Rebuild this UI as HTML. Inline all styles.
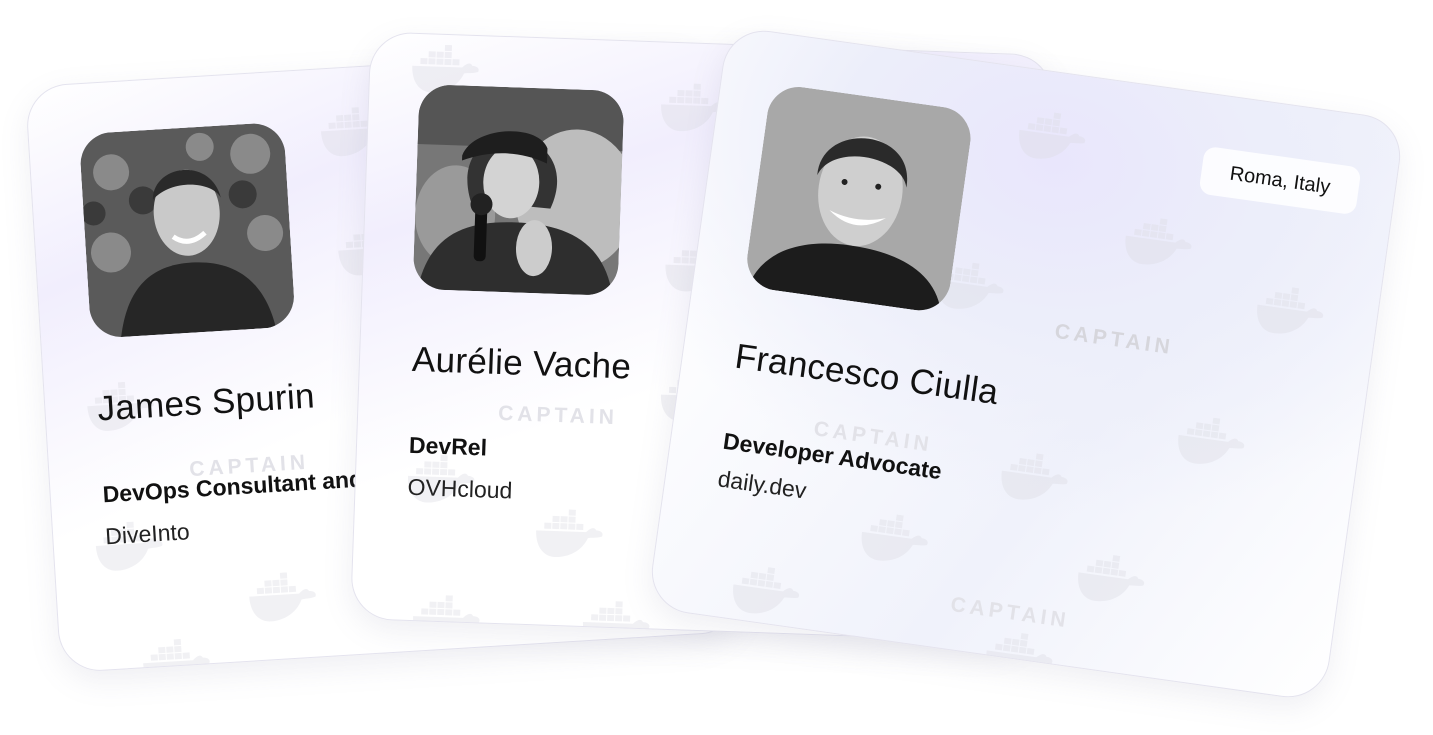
<!DOCTYPE html>
<html><head><meta charset="utf-8"><style>
html,body{margin:0;padding:0;background:#fff;width:1433px;height:735px;overflow:hidden;font-family:"Liberation Sans",sans-serif}
.card{position:absolute;width:684px;height:588px;border-radius:42px;overflow:hidden;
background:linear-gradient(160deg,#ffffff 0%,#f1eefd 25%,#ffffff 55%,#ffffff 100%);
border:1px solid #e4e3ee;box-shadow:0 10px 30px rgba(120,120,160,.12);box-sizing:border-box}
.c3{background:radial-gradient(ellipse 70% 60% at 50% 15%,#e9e6fc 0%,#eceefa 45%,rgba(255,255,255,0) 100%),linear-gradient(120deg,#fff 10%,#f0f2fb 60%,#fff 100%)}
.photo{position:absolute;left:50px;top:50px;width:205px;height:205px;border-radius:32px;overflow:hidden}
.name{position:absolute;left:52px;top:306px;font-size:35px;color:#111;white-space:nowrap;letter-spacing:.3px}
.role{position:absolute;left:52px;top:398px;font-size:23px;font-weight:bold;color:#111;white-space:nowrap}
.co{position:absolute;left:52px;top:440px;font-size:23px;color:#222;white-space:nowrap}
.cap{position:absolute;font-size:21px;font-weight:bold;color:#e2e2e8;letter-spacing:4px}
.wh{position:absolute;width:70px;height:50px}
.pill{position:absolute;left:488px;top:52px;width:158px;height:48px;border-radius:12px;background:rgba(255,255,255,.85);font-size:20px;line-height:48px;text-align:center;color:#111}
</style></head><body>
<svg width="0" height="0" style="position:absolute"><defs>
<symbol id="w" viewBox="0 0 70 50"><g fill="#dcdce4" opacity=".4">
<rect x="10" y="14" width="7" height="6"/><rect x="18" y="14" width="7" height="6"/><rect x="26" y="14" width="7" height="6"/><rect x="34" y="14" width="7" height="6"/><rect x="42" y="14" width="7" height="6"/>
<rect x="18" y="7" width="7" height="6"/><rect x="26" y="7" width="7" height="6"/><rect x="34" y="7" width="7" height="6"/><rect x="34" y="0" width="7" height="6"/>
<path d="M2 22 H52 C56 18 60 16 62 20 C66 20 70 22 68 26 C62 28 58 27 54 28 C48 42 34 48 22 48 C10 48 2 38 2 22Z"/></g></symbol>
</defs></svg>

<div class="card" style="left:42px;top:65px;transform:rotate(-3.5deg)">
<svg class="wh" style="left:290px;top:40px"><use href="#w"/></svg>
<svg class="wh" style="left:300px;top:160px"><use href="#w"/></svg>
<svg class="wh" style="left:40px;top:300px"><use href="#w"/></svg>
<svg class="wh" style="left:320px;top:300px"><use href="#w"/></svg>
<svg class="wh" style="left:40px;top:440px"><use href="#w"/></svg>
<svg class="wh" style="left:320px;top:440px"><use href="#w"/></svg>
<svg class="wh" style="left:190px;top:500px"><use href="#w"/></svg>
<svg class="wh" style="left:80px;top:560px"><use href="#w"/></svg>
<div class="cap" style="left:140px;top:380px">CAPTAIN</div>
<div class="photo"><svg width="205" height="205">
<rect width="205" height="205" fill="#5a5a5a"/>
<g fill="#8a8a8a"><circle cx="30" cy="40" r="18"/><circle cx="170" cy="30" r="20"/><circle cx="180" cy="110" r="18"/><circle cx="25" cy="120" r="20"/><circle cx="60" cy="170" r="15"/><circle cx="120" cy="20" r="14"/></g>
<g fill="#3a3a3a"><circle cx="60" cy="70" r="14"/><circle cx="160" cy="70" r="14"/><circle cx="10" cy="80" r="12"/></g>
<path d="M30 205 C40 150 70 135 105 135 C140 135 175 150 185 205Z" fill="#262626"/>
<ellipse cx="103" cy="85" rx="33" ry="43" fill="#c9c9c9"/>
<path d="M70 70 C72 35 130 30 138 72 C130 55 90 50 70 70Z" fill="#2a2a2a"/>
<path d="M88 108 Q103 120 120 106" stroke="#fff" stroke-width="5" fill="none"/>
</svg></div>
<div class="name">James Spurin</div>
<div class="role">DevOps Consultant and Trainer</div>
<div class="co">DiveInto</div>
</div>

<div class="card" style="left:360px;top:43px;transform:rotate(2deg)">
<svg class="wh" style="left:290px;top:40px"><use href="#w"/></svg>
<svg class="wh" style="left:40px;top:10px"><use href="#w"/></svg>
<svg class="wh" style="left:300px;top:200px"><use href="#w"/></svg>
<svg class="wh" style="left:300px;top:330px"><use href="#w"/></svg>
<svg class="wh" style="left:50px;top:420px"><use href="#w"/></svg>
<svg class="wh" style="left:180px;top:470px"><use href="#w"/></svg>
<svg class="wh" style="left:60px;top:560px"><use href="#w"/></svg>
<svg class="wh" style="left:230px;top:560px"><use href="#w"/></svg>
<div class="cap" style="left:140px;top:365px">CAPTAIN</div>
<div class="photo"><svg width="205" height="205">
<rect width="205" height="205" fill="#777"/>
<rect width="205" height="60" fill="#555"/>
<ellipse cx="160" cy="110" rx="60" ry="70" fill="#bdbdbd"/>
<ellipse cx="40" cy="130" rx="40" ry="50" fill="#9a9a9a"/>
<path d="M5 205 C15 150 50 135 100 135 C150 135 190 150 200 205Z" fill="#2e2e2e"/>
<path d="M55 115 C40 70 70 45 100 50 C135 55 150 85 135 120Z" fill="#333"/>
<ellipse cx="95" cy="95" rx="28" ry="36" fill="#d3d3d3"/>
<path d="M45 70 C55 40 120 35 130 60 L130 75 C100 62 70 65 45 75Z" fill="#1e1e1e"/>
<rect x="60" y="115" width="12" height="60" rx="5" fill="#111"/>
<circle cx="66" cy="118" r="11" fill="#222"/>
<ellipse cx="120" cy="160" rx="18" ry="28" fill="#ccc"/>
</svg></div>
<div class="name">Aurélie Vache</div>
<div class="role">DevRel</div>
<div class="co">OVHcloud</div>
</div>

<div class="card c3" style="left:684px;top:70px;transform:rotate(8deg)">
<svg class="wh" style="left:300px;top:40px"><use href="#w"/></svg>
<svg class="wh" style="left:420px;top:130px"><use href="#w"/></svg>
<svg class="wh" style="left:240px;top:200px"><use href="#w"/></svg>
<svg class="wh" style="left:560px;top:180px"><use href="#w"/></svg>
<svg class="wh" style="left:500px;top:320px"><use href="#w"/></svg>
<svg class="wh" style="left:330px;top:380px"><use href="#w"/></svg>
<svg class="wh" style="left:200px;top:460px"><use href="#w"/></svg>
<svg class="wh" style="left:420px;top:470px"><use href="#w"/></svg>
<svg class="wh" style="left:80px;top:530px"><use href="#w"/></svg>
<svg class="wh" style="left:340px;top:560px"><use href="#w"/></svg>
<div class="cap" style="left:365px;top:245px;color:#d6d6dc">CAPTAIN</div>
<div class="cap" style="left:140px;top:375px">CAPTAIN</div>
<div class="cap" style="left:300px;top:530px">CAPTAIN</div>
<div class="pill">Roma, Italy</div>
<div class="photo"><svg width="205" height="205">
<rect width="205" height="205" fill="#a8a8a8"/>
<path d="M5 205 C15 165 55 150 100 150 C150 150 190 165 200 205Z" fill="#1c1c1c"/>
<ellipse cx="103" cy="95" rx="42" ry="55" fill="#cfcfcf"/>
<path d="M58 85 C55 30 150 25 148 85 C140 55 70 50 58 85Z" fill="#2a2a2a"/>
<path d="M75 118 Q103 140 132 118 Q103 128 75 118Z" fill="#fff"/>
<circle cx="86" cy="88" r="3" fill="#222"/><circle cx="120" cy="88" r="3" fill="#222"/>
</svg></div>
<div class="name">Francesco Ciulla</div>
<div class="role">Developer Advocate</div>
<div class="co" style="top:436px">daily.dev</div>
</div>
</body></html>
